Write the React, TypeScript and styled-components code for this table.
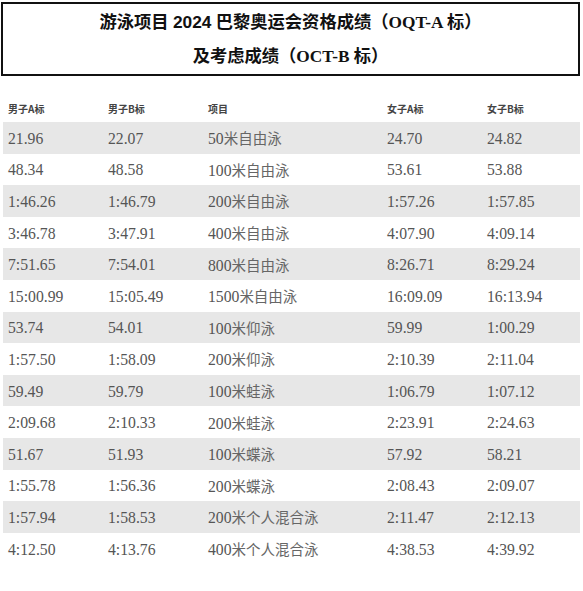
import React from 'react';
import styled, { createGlobalStyle } from 'styled-components';

interface Standard {
  menA: string;
  menB: string;
  event: string;
  womenA: string;
  womenB: string;
}

const standards: Standard[] = [
  { menA: '21.96', menB: '22.07', event: '50米自由泳', womenA: '24.70', womenB: '24.82' },
  { menA: '48.34', menB: '48.58', event: '100米自由泳', womenA: '53.61', womenB: '53.88' },
  { menA: '1:46.26', menB: '1:46.79', event: '200米自由泳', womenA: '1:57.26', womenB: '1:57.85' },
  { menA: '3:46.78', menB: '3:47.91', event: '400米自由泳', womenA: '4:07.90', womenB: '4:09.14' },
  { menA: '7:51.65', menB: '7:54.01', event: '800米自由泳', womenA: '8:26.71', womenB: '8:29.24' },
  { menA: '15:00.99', menB: '15:05.49', event: '1500米自由泳', womenA: '16:09.09', womenB: '16:13.94' },
  { menA: '53.74', menB: '54.01', event: '100米仰泳', womenA: '59.99', womenB: '1:00.29' },
  { menA: '1:57.50', menB: '1:58.09', event: '200米仰泳', womenA: '2:10.39', womenB: '2:11.04' },
  { menA: '59.49', menB: '59.79', event: '100米蛙泳', womenA: '1:06.79', womenB: '1:07.12' },
  { menA: '2:09.68', menB: '2:10.33', event: '200米蛙泳', womenA: '2:23.91', womenB: '2:24.63' },
  { menA: '51.67', menB: '51.93', event: '100米蝶泳', womenA: '57.92', womenB: '58.21' },
  { menA: '1:55.78', menB: '1:56.36', event: '200米蝶泳', womenA: '2:08.43', womenB: '2:09.07' },
  { menA: '1:57.94', menB: '1:58.53', event: '200米个人混合泳', womenA: '2:11.47', womenB: '2:12.13' },
  { menA: '4:12.50', menB: '4:13.76', event: '400米个人混合泳', womenA: '4:38.53', womenB: '4:39.92' },
];

const GlobalStyle = createGlobalStyle`
  body {
    margin: 0;
    background: #ffffff;
  }
`;

const Page = styled.div`
  width: 583px;
  box-sizing: border-box;
  padding: 2px 3px 0 1px;
`;

const TitleBox = styled.div`
  border: 2px solid #111;
  text-align: center;
  font-family: 'Liberation Serif', 'Noto Sans CJK SC', serif;
  font-weight: bold;
  font-size: 17.3px;
  line-height: 34px;
  padding-top: 1px;
  color: #111;
`;

const Year = styled.span`
  font-family: 'Liberation Sans', 'Noto Sans CJK SC', sans-serif;
`;

const Table = styled.div`
  margin: 20px 0 0 2px;
`;

const Row = styled.div<{ $shaded?: boolean; $height: string }>`
  display: grid;
  grid-template-columns: 100px 100px 179px 100px 1fr;
  align-items: center;
  height: ${p => p.$height};
  background: ${p => (p.$shaded ? '#e7e7e7' : 'transparent')};
`;

const HeadCell = styled.div`
  padding-left: 5px;
  font-family: 'Noto Sans CJK SC', 'Liberation Sans', sans-serif;
  font-weight: bold;
  font-size: 10px;
  line-height: 14px;
  color: #444;
`;

const Cell = styled.div`
  padding-left: 5px;
  padding-top: 2px;
  font-family: 'Liberation Serif', 'Noto Sans CJK SC', serif;
  font-size: 15.7px;
  line-height: 18px;
  color: #555;
  white-space: nowrap;
`;

const EventName = styled.span`
  font-family: 'Noto Sans CJK SC', sans-serif;
  font-size: 14.5px;
  color: #666;
`;

const splitEvent = (event: string) => {
  const m = event.match(/^(\d+)(.*)$/);
  return m ? [m[1], m[2]] : ['', event];
};

const App: React.FC = () => {
  return (
    <Page>
      <GlobalStyle />
      <TitleBox>
        <div>
          游泳项目 <Year>2024</Year> 巴黎奥运会资格成绩（OQT-A 标）
        </div>
        <div>及考虑成绩（OCT-B 标）</div>
      </TitleBox>

      <Table>
        <Row $height="26px">
          <HeadCell>男子A标</HeadCell>
          <HeadCell>男子B标</HeadCell>
          <HeadCell>项目</HeadCell>
          <HeadCell>女子A标</HeadCell>
          <HeadCell>女子B标</HeadCell>
        </Row>
        {standards.map((s, i) => {
          const [distance, stroke] = splitEvent(s.event);
          return (
            <Row key={s.event} $shaded={i % 2 === 0} $height="31.6px">
              <Cell>{s.menA}</Cell>
              <Cell>{s.menB}</Cell>
              <Cell>
                {distance}
                <EventName>{stroke}</EventName>
              </Cell>
              <Cell>{s.womenA}</Cell>
              <Cell>{s.womenB}</Cell>
            </Row>
          );
        })}
      </Table>
    </Page>
  );
};

export default App;
